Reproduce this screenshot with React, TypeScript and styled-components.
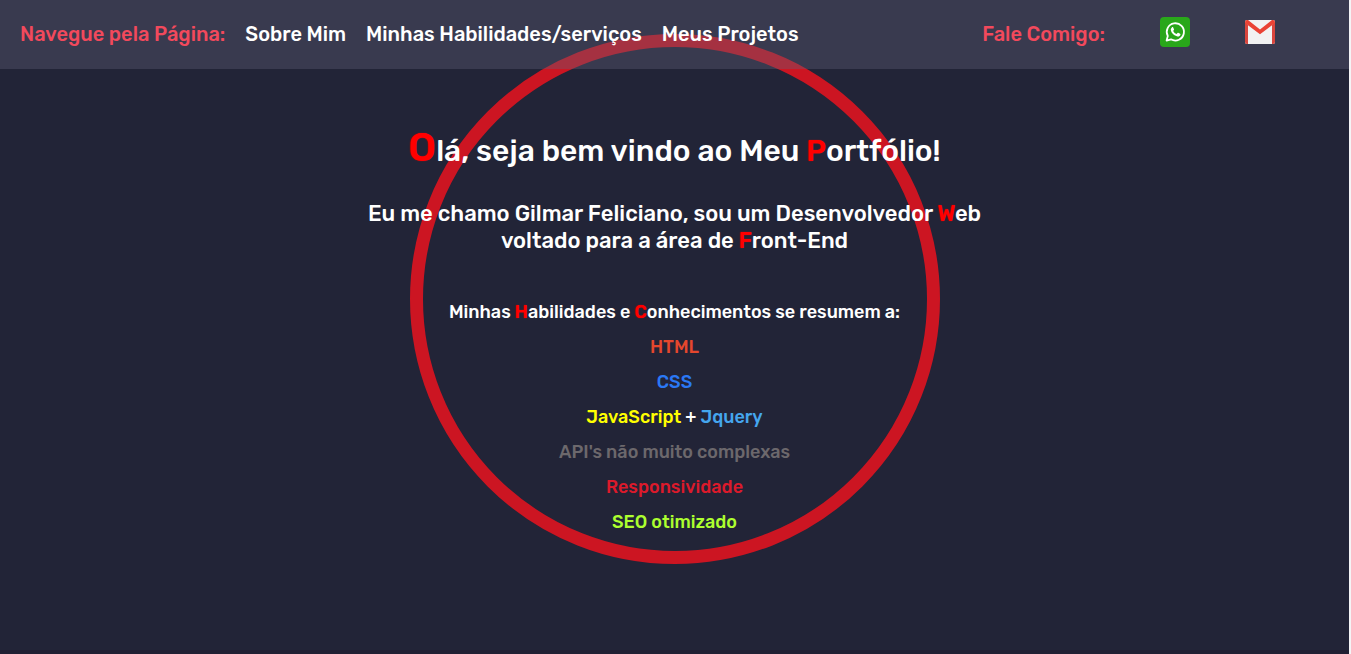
import React from "react";
import styled, { createGlobalStyle } from "styled-components";

const GlobalStyle = createGlobalStyle`
  * {
    box-sizing: border-box;
  }

  body {
    margin: 0;
    background: #f4f4f6;
    font-family: Rubik, Roboto, "Liberation Sans", sans-serif;
    font-weight: 500;
  }
`;

const Page = styled.div`
  position: relative;
  min-height: 100vh;
  margin-right: 2px;
  overflow: hidden;
  background: #222437;
  border-bottom: 4px solid #211f33;
`;

const Header = styled.header`
  position: relative;
  z-index: 1;
  display: flex;
  align-items: center;
  justify-content: space-between;
  height: 69px;
  padding: 0 74px 2px 20px;
  background: rgba(100, 99, 121, 0.365);
`;

const Nav = styled.nav`
  display: flex;
  align-items: center;
  gap: 20px;
`;

const Contact = styled.div`
  display: flex;
  align-items: center;
  gap: 55px;
`;

const Label = styled.span`
  color: #f2495c;
  font-size: 20px;
  line-height: 24px;
`;

const NavLink = styled.a`
  color: #fff;
  font-size: 20px;
  line-height: 24px;
  text-decoration: none;
`;

const IconLink = styled.a`
  display: flex;
  padding-bottom: 3px;

  svg {
    display: block;
  }
`;

const Ring = styled.div`
  position: absolute;
  top: 34px;
  left: 50%;
  width: 530px;
  height: 530px;
  border: 13px solid #cc1522;
  border-radius: 50%;
  transform: translateX(-50%);
`;

const Hero = styled.main`
  position: relative;
  display: flex;
  flex-direction: column;
  align-items: center;
  padding: 55px 20px 0;
  color: #fff;
  text-align: center;
`;

const Title = styled.h1`
  margin: 0;
  font-size: 30px;
  font-weight: 500;
  line-height: 48px;
`;

const Intro = styled.h2`
  max-width: 640px;
  margin: 25px 0 0;
  font-size: 22px;
  font-weight: 500;
  line-height: 27px;
`;

const Subtitle = styled.h3`
  margin: 41px 0 0;
  font-size: 18px;
  font-weight: 500;
  line-height: 35px;
`;

const Skills = styled.ul`
  margin: 0;
  padding: 0;
  list-style: none;
  font-size: 18px;
  line-height: 35px;
`;

const Accent = styled.span<{ $large?: boolean }>`
  color: #f00;
  font-size: ${({ $large }) => ($large ? "40px" : "inherit")};
  text-shadow: 0 0 1px #f00;
`;

const Tint = styled.span<{ $color: string }>`
  color: ${({ $color }) => $color};
`;

const WhatsAppIcon = () => (
  <svg width="30" height="30" viewBox="0 0 30 30" aria-hidden="true">
    <rect width="30" height="30" rx="4" fill="#29a71a" />
    <path
      d="M6.6 23.6 7.8 19A8.6 8.6 0 1 1 11 22.3Z"
      fill="none"
      stroke="#fff"
      strokeWidth="1.8"
      strokeLinejoin="round"
    />
    <path
      d="M11.9 10.4c.4-.4 1-.4 1.3.1l.8 1.8c.1.3 0 .6-.2.8l-.6.8c.8 1.5 1.9 2.5 3.4 3.1l.9-1c.2-.2.5-.3.8-.2l1.8.9c.4.2.4.6.3 1-.4 1.3-1.6 1.9-2.9 1.7-3.3-.6-6.2-3.4-6.7-6.4-.1-1 .4-2 1.1-2.6Z"
      fill="#fff"
    />
  </svg>
);

const GmailIcon = () => (
  <svg width="30" height="24" viewBox="0 0 30 24" aria-hidden="true">
    <rect width="30" height="24" rx="2" fill="#f2f2f2" />
    <path d="M0 2v20q0 2 2 2h1V5Z" fill="#d9453d" />
    <path d="M30 2v20q0 2-2 2h-1V5Z" fill="#d9453d" />
    <path d="M0 2Q0 0 2 0h1l12 9.6L27 0h1q2 0 2 2 0 1-1 1.8L15 14.2 1 3.8Q0 3 0 2Z" fill="#ea4335" />
  </svg>
);

export default function App() {
  return (
    <>
      <GlobalStyle />
      <Page>
        <Ring />
        <Header>
          <Nav>
            <Label>Navegue pela Página:</Label>
            <NavLink href="#sobre">Sobre Mim</NavLink>
            <NavLink href="#habilidades">Minhas Habilidades/serviços</NavLink>
            <NavLink href="#projetos">Meus Projetos</NavLink>
          </Nav>
          <Contact>
            <Label>Fale Comigo:</Label>
            <IconLink href="#whatsapp" aria-label="WhatsApp">
              <WhatsAppIcon />
            </IconLink>
            <IconLink href="#email" aria-label="Gmail">
              <GmailIcon />
            </IconLink>
          </Contact>
        </Header>
        <Hero>
          <Title>
            <Accent $large>O</Accent>lá, seja bem vindo ao Meu <Accent>P</Accent>ortfólio!
          </Title>
          <Intro>
            Eu me chamo Gilmar Feliciano, sou um Desenvolvedor <Accent>W</Accent>eb
            <br />
            voltado para a área de <Accent>F</Accent>ront-End
          </Intro>
          <Subtitle>
            Minhas <Accent>H</Accent>abilidades e <Accent>C</Accent>onhecimentos se resumem a:
          </Subtitle>
          <Skills>
            <li><Tint $color="#e5472d">HTML</Tint></li>
            <li><Tint $color="#2a78f5">CSS</Tint></li>
            <li>
              <Tint $color="#ffff00">JavaScript</Tint> + <Tint $color="#45a6ee">Jquery</Tint>
            </li>
            <li><Tint $color="#6c686c">API's não muito complexas</Tint></li>
            <li><Tint $color="#dc1a2b">Responsividade</Tint></li>
            <li><Tint $color="#adff2f">SEO otimizado</Tint></li>
          </Skills>
        </Hero>
      </Page>
    </>
  );
}
